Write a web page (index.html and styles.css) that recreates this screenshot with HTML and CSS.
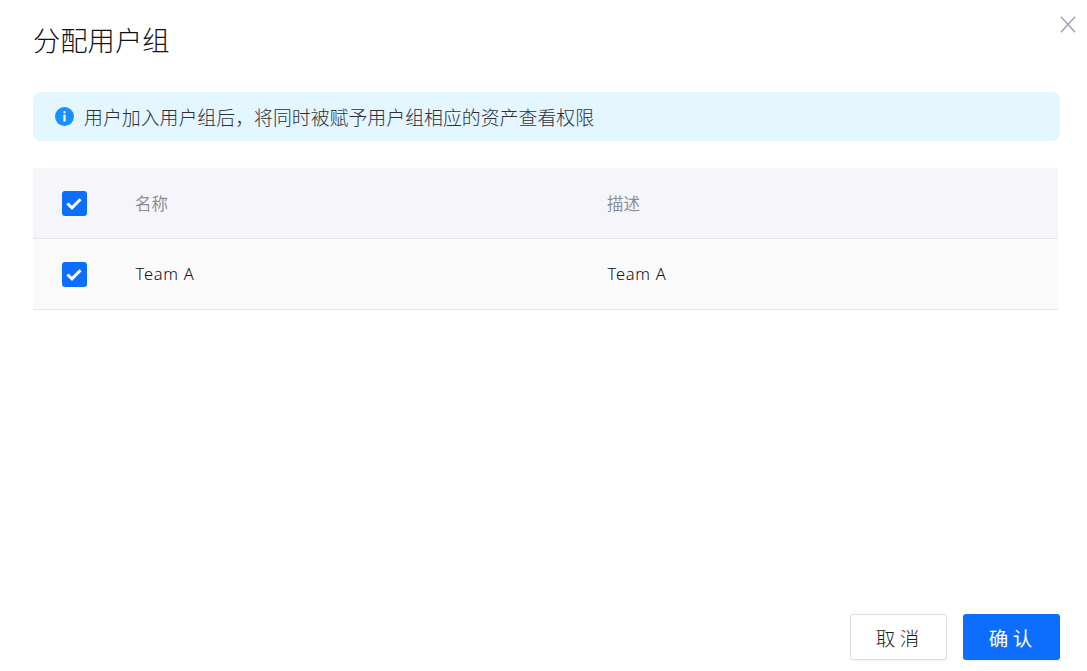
FILE: index.html
```html
<!DOCTYPE html>
<html lang="zh">
<head>
<meta charset="utf-8">
<title>分配用户组</title>
<link rel="stylesheet" href="styles.css">
</head>
<body>
<div class="dialog">
  <button class="close" aria-label="关闭">
    <svg width="16" height="17" viewBox="0 0 16 17"><path d="M1 0.7 L15 16.3 M15 0.7 L1 16.3" fill="none" stroke="#a5a5ba" stroke-width="1.6"/></svg>
  </button>
  <h1 class="title">分配用户组</h1>
  <div class="alert">
    <svg class="alert-icon" width="19" height="19" viewBox="0 0 19 19"><circle cx="9.5" cy="9.5" r="9.5" fill="#1890ff"/><rect x="8.4" y="4" width="2.2" height="2.2" rx="1" fill="#fff"/><rect x="8.4" y="7.6" width="2.2" height="7" fill="#fff"/></svg>
    <span>用户加入用户组后，将同时被赋予用户组相应的资产查看权限</span>
  </div>
  <div class="table">
    <div class="row head">
      <div class="cell-check"><span class="check"><svg width="16" height="13" viewBox="0 0 16 13"><path d="M1.5 6.5 L6 10.8 L14.5 2.2" fill="none" stroke="#fff" stroke-width="3"/></svg></span></div>
      <div class="cell-name">名称</div>
      <div class="cell-desc">描述</div>
    </div>
    <div class="row body">
      <div class="cell-check"><span class="check"><svg width="16" height="13" viewBox="0 0 16 13"><path d="M1.5 6.5 L6 10.8 L14.5 2.2" fill="none" stroke="#fff" stroke-width="3"/></svg></span></div>
      <div class="cell-name text">Team A</div>
      <div class="cell-desc text">Team A</div>
    </div>
  </div>
  <div class="spacer"></div>
  <div class="footer">
    <button class="btn btn-default">取 消</button>
    <button class="btn btn-primary">确 认</button>
  </div>
</div>
</body>
</html>
```
FILE: styles.css
```css
* { box-sizing: border-box; }
html, body { margin: 0; height: 100%; background: #fff; }
body { font-family: "Noto Sans", "Noto Sans CJK SC", sans-serif; overflow: hidden; }
.dialog { position: relative; height: 671px; padding: 21px 27px 11px 33px; display: flex; flex-direction: column; }
.close { position: absolute; top: 16px; right: 11px; width: 16px; height: 17px; padding: 0; border: 0; background: none; display: block; }
.close svg { display: block; }
.title { margin: 0 0 34px 0; font-size: 27.3px; line-height: 37px; height: 37px; font-weight: 300; color: #111116; font-family: "Noto Sans CJK SC", sans-serif; }
.alert { height: 49px; background: #e4f6ff; border-radius: 8px; display: flex; align-items: center; padding-left: 22px; font-size: 18.9px; font-weight: 300; color: #2f2f36; font-family: "Noto Sans CJK SC", sans-serif; }
.alert-icon { margin-right: 10px; flex: none; }
.table { margin-top: 27px; margin-right: 2px; }
.row { display: flex; align-items: center; height: 71px; font-size: 16.5px; border-bottom: 1px solid #e4e4ea; }
.head { background: #f5f5fa; color: #8e8e9b; border-top-left-radius: 3px; border-top-right-radius: 3px; }
.body { background: #fafafa; color: #2c2c33; }
.cell-check { width: 102px; padding-left: 28.5px; display: flex; align-items: center; flex: none; }
.cell-name { width: 472px; flex: none; }
.cell-desc { flex: 1; }
.text { padding-left: 0.6px; padding-bottom: 2px; letter-spacing: 0.7px; font-weight: 300; color: #111116; }
.check { width: 25px; height: 25px; background: #0d6efd; border-radius: 3px; display: flex; align-items: center; justify-content: center; }
.check svg { display: block; }
.spacer { flex: 1; }
.footer { display: flex; justify-content: flex-end; gap: 16px; }
.btn { width: 97px; height: 46px; border-radius: 3px; font-size: 19.5px; font-weight: 300; font-family: "Noto Sans CJK SC", sans-serif; padding: 0 2px 0 0; }
.btn-default { background: #fff; border: 1px solid #dcdce4; color: #1c1c22; box-shadow: 0 1px 2px rgba(0,0,0,.05); }
.btn-primary { background: #0d6efd; border: 0; color: #fff; font-weight: 400; box-shadow: 0 1px 2px rgba(0,0,0,.08); }
```
